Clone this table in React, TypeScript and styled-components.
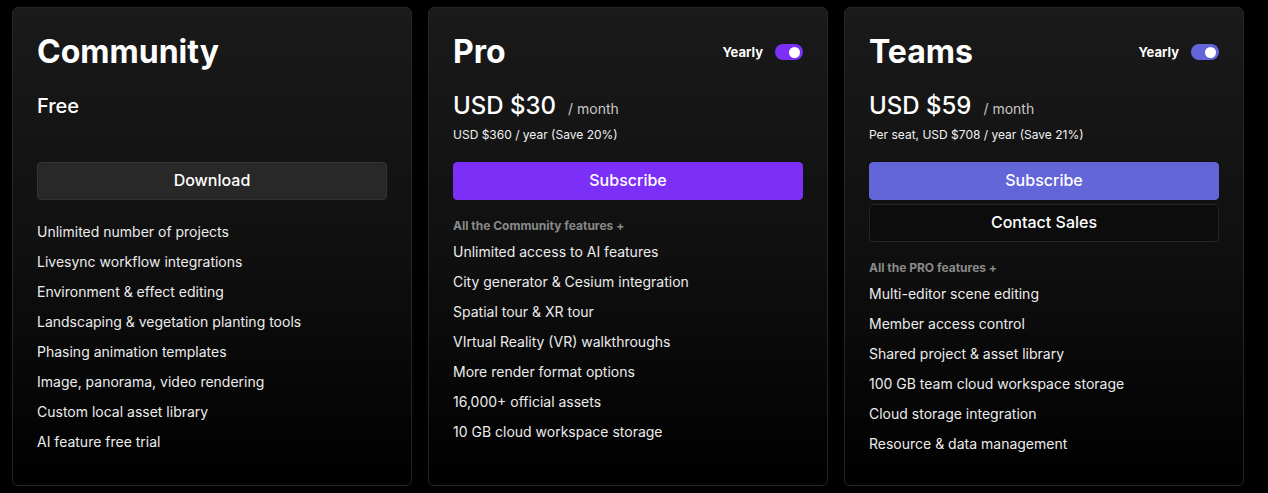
import React from "react";
import styled, { createGlobalStyle } from "styled-components";

const Global = createGlobalStyle`
  html, body { margin: 0; padding: 0; background: #000; }
  body { font-family: Inter, "Noto Sans", "Liberation Sans", sans-serif; color: #fff; }
  * { box-sizing: border-box; }
`;

const Page = styled.div`
  display: grid;
  grid-template-columns: repeat(3, 400px);
  gap: 16px;
  padding: 7px 12px;
  background: #000;
  height: 493px;
`;

const Card = styled.div`
  height: 479px;
  border: 1px solid #262626;
  border-radius: 6px;
  background: linear-gradient(180deg, #1a1a1a 0%, #101010 50%, #000 100%);
  padding: 25px 24px 24px 24px;
  display: flex;
  flex-direction: column;
`;

const Header = styled.div`
  display: flex;
  align-items: center;
  justify-content: space-between;
  height: 38px;
`;

const Title = styled.h2`
  margin: 0;
  font-size: 32px;
  font-weight: 700;
  line-height: 38px;
  color: #fff;
`;

const ToggleWrap = styled.div`
  display: flex;
  align-items: center;
  gap: 12px;
  font-size: 13px;
  font-weight: 700;
  color: #fff;
`;

const Track = styled.div<{ $color: string }>`
  width: 28px;
  height: 16px;
  border-radius: 8px;
  background: ${(p) => p.$color};
  display: flex;
  align-items: center;
  justify-content: flex-end;
  padding: 0 3px;
`;

const Knob = styled.div`
  width: 11px;
  height: 11px;
  border-radius: 50%;
  background: #fff;
`;

const PriceBlock = styled.div`
  height: 91px;
  padding-top: 20px;
`;

const PriceLine = styled.div`
  display: flex;
  align-items: baseline;
  gap: 12px;
  height: 30px;
  line-height: 30px;
`;

const Amount = styled.span<{ $size: number }>`
  font-size: ${(p) => p.$size}px;
  font-weight: 500;
  color: #fff;
`;

const Per = styled.span`
  font-size: 14px;
  color: #c8c8c8;
`;

const Sub = styled.div`
  margin-top: 6px;
  font-size: 12px;
  line-height: 16px;
  color: #f2f2f2;
`;

const Buttons = styled.div`
  display: flex;
  flex-direction: column;
  gap: 4px;
`;

const Button = styled.button<{ $bg: string; $border: string }>`
  height: 38px;
  width: 100%;
  border-radius: 4px;
  background: ${(p) => p.$bg};
  border: 1px solid ${(p) => p.$border};
  color: #fff;
  font-family: inherit;
  font-size: 16px;
  font-weight: 500;
  line-height: 34px;
  padding: 0 0 2px;
  cursor: pointer;
`;

const Features = styled.ul`
  list-style: none;
  margin: 17px 0 0;
  padding: 0;
`;

const Lead = styled.li`
  font-size: 12px;
  font-weight: 700;
  line-height: 18px;
  color: #8a8a8a;
  margin-bottom: 2px;
`;

const Item = styled.li`
  font-size: 14px;
  line-height: 30px;
  color: #ececec;
`;

type Plan = {
  name: string;
  toggle?: string;
  amount: string;
  amountSize: number;
  per?: string;
  sub?: string;
  buttons: { label: string; bg: string; border: string }[];
  lead?: string;
  items: string[];
};

const plans: Plan[] = [
  {
    name: "Community",
    amount: "Free",
    amountSize: 20,
    buttons: [{ label: "Download", bg: "#282828", border: "#333" }],
    items: [
      "Unlimited number of projects",
      "Livesync workflow integrations",
      "Environment & effect editing",
      "Landscaping & vegetation planting tools",
      "Phasing animation templates",
      "Image, panorama, video rendering",
      "Custom local asset library",
      "AI feature free trial",
    ],
  },
  {
    name: "Pro",
    toggle: "#7b2ff7",
    amount: "USD $30",
    amountSize: 24,
    per: "/ month",
    sub: "USD $360 / year (Save 20%)",
    buttons: [{ label: "Subscribe", bg: "#7b2ff7", border: "#7b2ff7" }],
    lead: "All the Community features +",
    items: [
      "Unlimited access to AI features",
      "City generator & Cesium integration",
      "Spatial tour & XR tour",
      "VIrtual Reality (VR) walkthroughs",
      "More render format options",
      "16,000+ official assets",
      "10 GB cloud workspace storage",
    ],
  },
  {
    name: "Teams",
    toggle: "#6366d8",
    amount: "USD $59",
    amountSize: 24,
    per: "/ month",
    sub: "Per seat, USD $708 / year (Save 21%)",
    buttons: [
      { label: "Subscribe", bg: "#6366d8", border: "#6366d8" },
      { label: "Contact Sales", bg: "#0c0c0c", border: "#262626" },
    ],
    lead: "All the PRO features +",
    items: [
      "Multi-editor scene editing",
      "Member access control",
      "Shared project & asset library",
      "100 GB team cloud workspace storage",
      "Cloud storage integration",
      "Resource & data management",
    ],
  },
];

export default function App() {
  return (
    <>
      <Global />
      <Page>
        {plans.map((p) => (
          <Card key={p.name}>
            <Header>
              <Title>{p.name}</Title>
              {p.toggle && (
                <ToggleWrap>
                  Yearly
                  <Track $color={p.toggle}>
                    <Knob />
                  </Track>
                </ToggleWrap>
              )}
            </Header>
            <PriceBlock>
              <PriceLine>
                <Amount $size={p.amountSize}>{p.amount}</Amount>
                {p.per && <Per>{p.per}</Per>}
              </PriceLine>
              {p.sub && <Sub>{p.sub}</Sub>}
            </PriceBlock>
            <Buttons>
              {p.buttons.map((b) => (
                <Button key={b.label} $bg={b.bg} $border={b.border}>
                  {b.label}
                </Button>
              ))}
            </Buttons>
            <Features>
              {p.lead && <Lead>{p.lead}</Lead>}
              {p.items.map((it) => (
                <Item key={it}>{it}</Item>
              ))}
            </Features>
          </Card>
        ))}
      </Page>
    </>
  );
}
